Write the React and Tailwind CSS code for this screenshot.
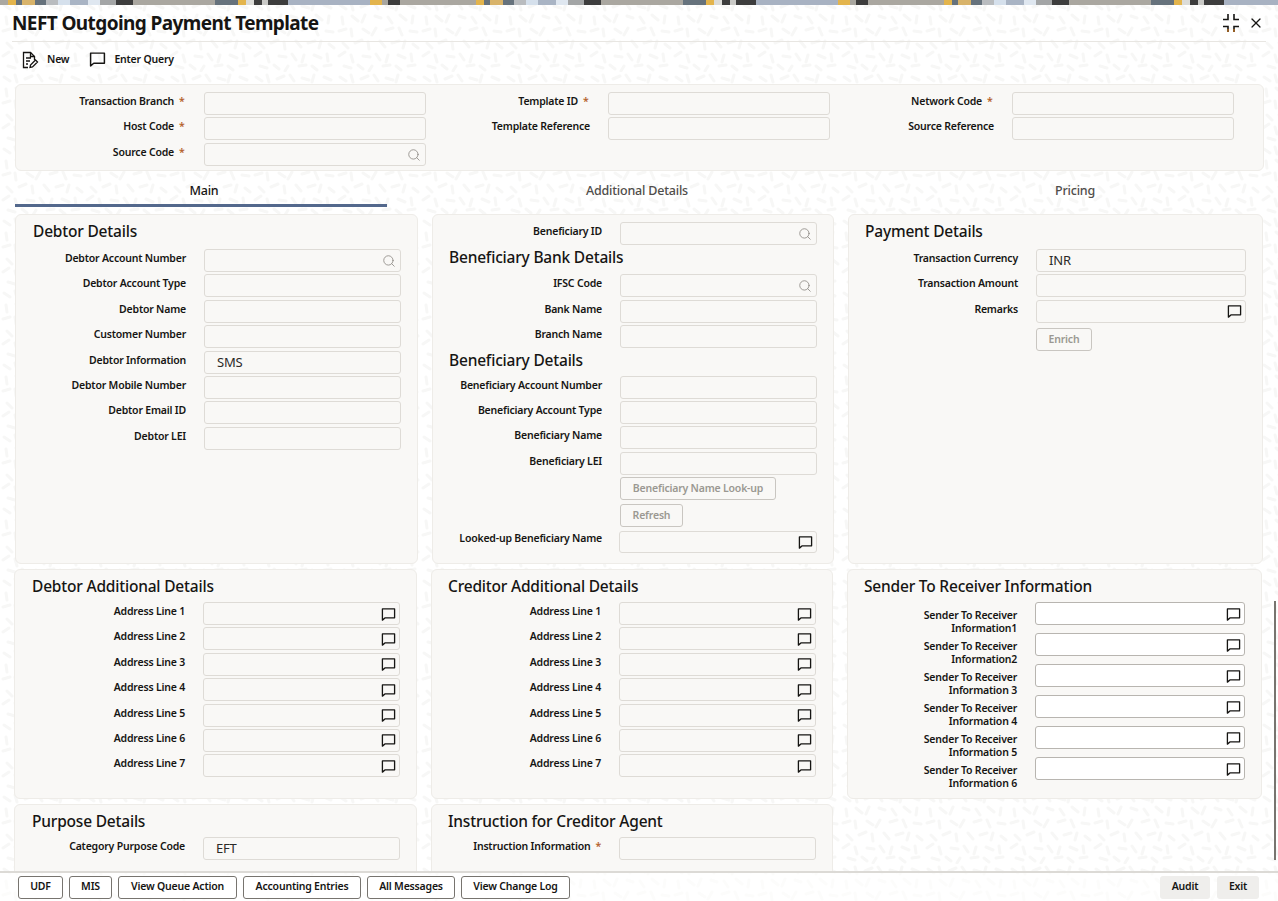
import { Search, X } from "lucide-react";

// one run of the banner, repeated across the top of the page
const banner = [
  ["#aaa7a0", 8], ["#e3b44c", 8], ["#66727c", 6], ["#d8b36a", 13], ["#66727c", 11], ["#b9bcbf", 12], ["#d5e0ec", 12],
  ["#a9b4c4", 18], ["#dfe7f0", 12], ["#a3a5a6", 16], ["#3d3d3d", 17], ["#aaa7a0", 82], ["#66727c", 23], ["#e3b44c", 8],
  ["#dcdcd8", 8], ["#3d3d3d", 8], ["#c9c9c6", 6], ["#3d3d3d", 20], ["#a8b2c2", 82], ["#e3b44c", 12], ["#a8a69f", 6],
  ["#3d3d3d", 12], ["#aaa7a0", 68],
];
const mosaic = [...banner, ...banner, ...banner];

function Comment({ className = "" }) {
  return (
    <svg viewBox="0 0 16 16" className={className} fill="none" stroke="currentColor" strokeWidth="1.4">
      <path d="M1.5 2h13v9.5H4.5l-3 2.5z" strokeLinejoin="round" />
    </svg>
  );
}

function Input({ value, icon, white, className = "" }) {
  return (
    <div
      className={
        (white ? "border-[#b8b5b0] bg-white " : "border-[#dedbd6] bg-[#f9f8f6] ") +
        "flex flex-none items-center justify-between rounded-[3px] border pl-3 " +
        (icon === "comment" ? "pr-[3px] " : "pr-[4px] ") +
        className
      }
    >
      <span className="pt-px text-[13px] font-normal text-[#2b2a28]">{value}</span>
      {icon === "search" && <Search className="mt-px h-[14px] w-[14px] text-[#8a8782]" strokeWidth={1.4} />}
      {icon === "comment" && <Comment className="mt-px h-[15px] w-[15px] text-[#161513]" />}
    </div>
  );
}

function Field({ label, value, icon, star, inputClass = "h-[23px] w-[197px]", labelClass = "pt-[2px]" }) {
  return (
    <div className="flex h-[25.4px]">
      <div className={"w-[169px] text-right leading-[14px] " + labelClass}>
        {label}
        {star && <span className="ml-[5px] text-[#b4612c]">*</span>}
      </div>
      <Input value={value} icon={icon} className={"ml-[18px] " + inputClass} />
    </div>
  );
}

function SenderField({ label }) {
  return (
    <div className="flex h-[31.1px]">
      <div className="w-[169px] pl-[60px] pt-[7px] text-right leading-[12.5px]">{label}</div>
      <Input white icon="comment" className="ml-[18px] h-[23px] w-[210px]" />
    </div>
  );
}

function TopField({ label, star, icon }) {
  return (
    <div className="flex h-[25.3px]">
      <div className={(star ? "pr-[30px] " : "pr-[18px] ") + "w-[182px] pt-[2px] text-right leading-[14px]"}>
        <span className="relative">
          {label}
          {star && <span className="absolute left-full ml-[5px] text-[#b4612c]">*</span>}
        </span>
      </div>
      <Input icon={icon} className="h-[23px] w-[222px]" />
    </div>
  );
}

function Heading({ children, className = "" }) {
  return <h2 className={"h-[21px] text-[15.5px] font-medium leading-[21px] tracking-[-0.2px] text-[#161513] " + className}>{children}</h2>;
}

function Panel({ className = "", children }) {
  return <section className={"rounded-md border border-[#eeece8] bg-[#f9f8f6] " + className}>{children}</section>;
}

function GhostButton({ children, className = "" }) {
  return (
    <button className={"ml-[187px] block h-[23px] rounded-[3px] border border-[#c9c6c1] bg-[#f9f8f6] font-semibold text-[#9b9892] " + className}>
      {children}
    </button>
  );
}

const lines = ["Address Line 1", "Address Line 2", "Address Line 3", "Address Line 4", "Address Line 5", "Address Line 6", "Address Line 7"];

export default function App() {
  return (
    <div className="relative flex h-[901px] w-[1278px] flex-col overflow-hidden bg-white text-[10.5px] font-semibold tracking-[-0.2px] text-[#161513] [font-family:'Noto_Sans',sans-serif]">
      <svg className="absolute inset-0 h-full w-full" aria-hidden="true">
        <defs>
          <pattern id="grain" width="84" height="72" patternUnits="userSpaceOnUse">
            <g stroke="#f7f7f6" strokeWidth="3" strokeLinecap="round" fill="none">
              <path d="M4 5l6 4M15 3l2 7M25 7l7-3M38 3l4 6M50 6l7 2M62 3l-2 7M72 5l7 3M6 17l1 7M16 16l6 5M29 15l-3 7M39 16l6 2M52 17l4 6M64 15l6 5M77 16l-1 7M3 31l7-2M15 29l1 7M27 29l6 4M40 28l-4 7M50 30l7-2M63 28l3 7M74 31l7 1M7 43l5 5M19 43l7-3M32 42l1 7M44 41l5 6M56 43l7-2M69 41l-2 7M77 44l5 4M3 56l6-4M15 55l2 7M27 56l7 1M40 54l4 6M52 55l-2 7M62 55l7 3M75 54l1 7M8 66l7 2M22 65l5 4M36 66l-3 5M47 66l7-1M60 66l5 4M72 66l7-1" />
            </g>
          </pattern>
        </defs>
        <rect width="100%" height="100%" fill="url(#grain)" />
      </svg>

      <div className="relative flex h-[5px] flex-none overflow-hidden">
        {mosaic.map(([color, width], i) => (
          <span key={i} className="h-full flex-none" style={{ backgroundColor: color, width }} />
        ))}
      </div>

      <header className="relative mx-3 flex h-[37px] flex-none items-center justify-between border-b border-[#e8e6e2]">
        <h1 className="text-[19px] font-bold leading-none tracking-[-0.6px]">NEFT Outgoing Payment Template</h1>
        <div className="flex items-center gap-[8px] pr-[2px]">
          <svg viewBox="0 0 18 18" className="h-[18px] w-[18px]" fill="none" stroke="#161513" strokeWidth="1.6">
            <path d="M6 0v5.5H1M12 0v5.5h5M6 18v-5.5H1M12 18v-5.5h5" />
            <path d="M6 15v3M12 15v3" stroke="#a8651f" />
          </svg>
          <X className="h-[16px] w-[16px]" strokeWidth={1.8} />
        </div>
      </header>

      <div className="relative flex h-[42px] flex-none items-center gap-[20px] pb-[7px] pl-[21px]">
        <div className="flex items-center gap-2">
          <svg viewBox="0 0 18 18" className="h-[18px] w-[18px]" fill="none" stroke="#161513" strokeWidth="1.3">
            <path d="M7 16.5H2.5v-15h7l4 4V9" />
            <path d="M9.5 1.5v4h4M5 7h5M5 10h4M5 13h2" />
            <path d="M9 16.5l.5-2.5 5-5 2 2-5 5z" />
          </svg>
          <span>New</span>
        </div>
        <div className="flex items-center gap-[8px]">
          <Comment className="h-[17px] w-[17px]" />
          <span>Enter Query</span>
        </div>
      </div>

      <main className="relative min-h-0 flex-1 overflow-hidden">
        <section className="ml-[15px] h-[87px] w-[1249px] rounded-md border border-[#eeece8] bg-[#f9f8f6] pl-[6px] pt-[7px]">
          <div className="flex">
            <div className="w-[404px]">
              <TopField label="Transaction Branch" star />
              <TopField label="Host Code" star />
              <TopField label="Source Code" star icon="search" />
            </div>
            <div className="w-[404px]">
              <TopField label="Template ID" star />
              <TopField label="Template Reference" />
            </div>
            <div className="w-[404px]">
              <TopField label="Network Code" star />
              <TopField label="Source Reference" />
            </div>
          </div>
        </section>

        <nav className="ml-[15px] flex h-[36px] w-[1248px] text-[12.5px] font-medium text-[#4f4d4a]">
          <div className="w-[372px] border-b-[3px] border-[#53688c] pl-[6px] pt-[11px] text-center leading-[18px] text-[#161513]">Main</div>
          <div className="w-[500px] pt-[11px] text-center leading-[18px]">Additional Details</div>
          <div className="w-[376px] pt-[11px] text-center leading-[18px]">Pricing</div>
        </nav>

        <div className="ml-[15px] mt-[7px] flex gap-[14px]">
          <Panel className="h-[350px] w-[403px] pl-px pt-[6px]">
            <Heading className="ml-[16px]">Debtor Details</Heading>
            <div className="mt-[7px]">
              <Field label="Debtor Account Number" icon="search" />
              <Field label="Debtor Account Type" />
              <Field label="Debtor Name" />
              <Field label="Customer Number" />
              <Field label="Debtor Information" value="SMS" />
              <Field label="Debtor Mobile Number" />
              <Field label="Debtor Email ID" />
              <Field label="Debtor LEI" />
            </div>
          </Panel>

          <Panel className="h-[350px] w-[402px] pt-[7px]">
            <Field label="Beneficiary ID" icon="search" />
            <Heading className="ml-[16px]">Beneficiary Bank Details</Heading>
            <div className="mt-[6px]">
              <Field label="IFSC Code" icon="search" />
              <Field label="Bank Name" />
              <Field label="Branch Name" />
            </div>
            <Heading className="ml-[16px] -mt-px">Beneficiary Details</Heading>
            <div className="mt-[5px]">
              <Field label="Beneficiary Account Number" />
              <Field label="Beneficiary Account Type" />
              <Field label="Beneficiary Name" />
              <Field label="Beneficiary LEI" />
            </div>
            <GhostButton className="w-[156px]">Beneficiary Name Look-up</GhostButton>
            <GhostButton className="mt-1 w-[63px]">Refresh</GhostButton>
            <div className="mt-1">
              <Field label="Looked-up Beneficiary Name" icon="comment" labelClass="pt-0" inputClass="h-[22px] w-[198px] -translate-x-px" />
            </div>
          </Panel>

          <Panel className="h-[350px] w-[415px] pt-[6px]">
            <Heading className="ml-[16px]">Payment Details</Heading>
            <div className="mt-[7px]">
              <Field label="Transaction Currency" value="INR" inputClass="h-[23px] w-[210px]" />
              <Field label="Transaction Amount" inputClass="h-[23px] w-[210px]" />
              <Field label="Remarks" icon="comment" inputClass="h-[23px] w-[210px]" />
            </div>
            <GhostButton className="mt-[3px] w-[56px]">Enrich</GhostButton>
          </Panel>
        </div>

        <div className="ml-[14px] mt-[5px] flex gap-[14px]">
          <Panel className="h-[230px] w-[403px] pl-px pt-[6px]">
            <Heading className="ml-[16px]">Debtor Additional Details</Heading>
            <div className="mt-[5px]">
              {lines.map((line) => (
                <Field key={line} label={line} icon="comment" />
              ))}
            </div>
          </Panel>
          <Panel className="h-[230px] w-[402px] pt-[6px]">
            <Heading className="ml-[16px]">Creditor Additional Details</Heading>
            <div className="mt-[5px]">
              {lines.map((line) => (
                <Field key={line} label={line} icon="comment" />
              ))}
            </div>
          </Panel>
          <Panel className="h-[230px] w-[415px] pt-[6px]">
            <Heading className="ml-[16px]">Sender To Receiver Information</Heading>
            <div className="mt-[5px]">
              <SenderField label="Sender To Receiver Information1" />
              <SenderField label="Sender To Receiver Information2" />
              <SenderField label="Sender To Receiver Information 3" />
              <SenderField label="Sender To Receiver Information 4" />
              <SenderField label="Sender To Receiver Information 5" />
              <SenderField label="Sender To Receiver Information 6" />
            </div>
          </Panel>
        </div>

        <div className="ml-[14px] mt-[5px] flex gap-[14px]">
          <Panel className="h-[80px] w-[403px] pl-px pt-[6px]">
            <Heading className="ml-[16px]">Purpose Details</Heading>
            <div className="mt-[5px]">
              <Field label="Category Purpose Code" value="EFT" />
            </div>
          </Panel>
          <Panel className="h-[80px] w-[402px] pt-[6px]">
            <Heading className="ml-[16px]">Instruction for Creditor Agent</Heading>
            <div className="mt-[5px]">
              <Field label="Instruction Information" star />
            </div>
          </Panel>
        </div>
      </main>

      <footer className="relative flex h-[30px] flex-none items-center justify-between border-t-2 border-[#dcdad6] bg-white/60 pl-[18px] pr-[19px]">
        <div className="flex gap-[6px]">
          {[["UDF", "w-[45px]"], ["MIS", "w-[43px]"], ["View Queue Action", "w-[119px]"], ["Accounting Entries", "w-[118px]"], ["All Messages", "w-[88px]"], ["View Change Log", "w-[109px]"]].map(([name, width]) => (
            <button key={name} className={"h-[23px] rounded-[3px] border border-[#77746f] bg-white font-semibold " + width}>
              {name}
            </button>
          ))}
        </div>
        <div className="flex gap-[7px]">
          <button className="h-[23px] w-[50px] rounded-[3px] bg-[#efeeec] font-semibold">Audit</button>
          <button className="h-[23px] w-[42px] rounded-[3px] bg-[#efeeec] font-semibold">Exit</button>
        </div>
      </footer>

      <div className="absolute right-[2px] top-[601px] h-[259px] w-[2px] bg-[#77746f]" />
    </div>
  );
}
